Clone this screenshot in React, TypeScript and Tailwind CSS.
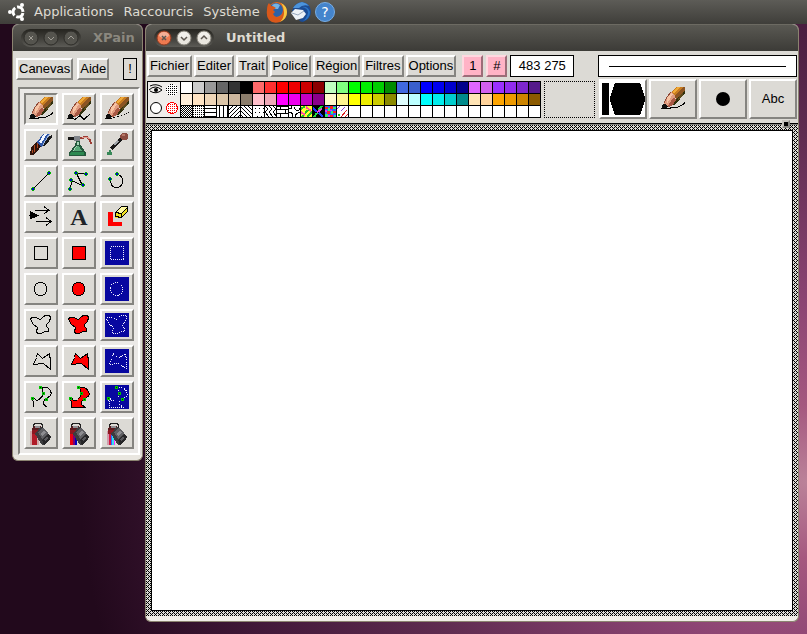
import type { ReactNode } from "react";
import clsx from "clsx";

const SWATCHES = [
  "#ffffff", "#cccccc", "#999999", "#666666", "#333333", "#000000", "#ff6a6a", "#ff3030", "#ff0000", "#ee0000",
  "#cd0000", "#8b0000", "#c1ffc1", "#80ff80", "#00ff00", "#00ee00", "#00cd00", "#008b00", "#4169e1", "#3a5fcd",
  "#0000ff", "#0000ee", "#0000cd", "#00008b", "#e066ff", "#d15fee", "#9b30ff", "#912cee", "#7d26cd", "#551a8b",
  "#ffefdb", "#ffe4c4", "#eed5b7", "#dcc6a8", "#cdb79e", "#8b7d6b", "#ffc0cb", "#eea9b8", "#ff00ff", "#ee00ee",
  "#c400c4", "#8b008b", "#fffacd", "#fff68f", "#ffff00", "#eeee00", "#cdcd00", "#8b8b00", "#e0ffff", "#bbffff",
  "#00ffff", "#00eeee", "#00cdcd", "#008b8b", "#ffe4b5", "#ffd39b", "#ffa500", "#ee9a00", "#cd8500", "#8b5a00",
];

// 11x11 fill patterns, drawn on white
const PATTERNS: ReactNode[] = [
  <rect width="11" height="11" fill="url(#checker)" />,
  <rect width="11" height="11" fill="url(#dots)" />,
  <path d="M0 2.5h11M0 6.5h11M0 10.5h11" stroke="#000" />,
  <path d="M2.5 0v11M6.5 0v11M10.5 0v11" stroke="#000" />,
  <path d="M0 4L4 0M0 8L8 0M1 11L11 1M5 11L11 5M9 11L11 9" stroke="#000" />,
  <path d="M7 0L11 4M3 0L11 8M0 1L10 11M0 5L6 11M0 9L2 11" stroke="#000" />,
  <path d="M2 2h1v1H2zM6 2h1v1H6zM2 6h1v1H2zM6 6h1v1H6zM10 2h1v1h-1zM10 6h1v1h-1zM4 10h1v1H4zM8 10h1v1H8z" />,
  <path d="M0 0l3 3-3 3 4 5M4 0l3 3-3 3 4 5M8 0l3 3-3 3 4 5" stroke="#000" fill="none" />,
  <path d="M0 3.5h11M0 7.5h11M3.5 0v4M8.5 4v4M3.5 8v3M0 .5h11" stroke="#000" fill="none" />,
  <path d="M0 3q3 0 3-3M0 6q4 0 4 5M5 1q1 4 5 3l1-2M11 7q-4-1-5 4" stroke="#000" fill="none" />,
  <>
    <rect width="11" height="11" fill="#ffff30" />
    <path d="M0 3L4 0M1 11L7 4M6 11L11 6" stroke="#20c020" strokeWidth="2" />
    <path d="M5 1l5 4M0 6l4 3" stroke="#ff50a0" strokeWidth="2" />
  </>,
  <>
    <rect width="11" height="11" />
    <path d="M0 2l4 4M6 7l4 4" stroke="#2040ff" strokeWidth="2" />
    <path d="M5 3l5-3M1 11l3-4" stroke="#20e040" strokeWidth="2" />
    <path d="M4 6l5-3" stroke="#f040e0" strokeWidth="2" />
  </>,
  <>
    <rect width="11" height="11" fill="#3060ff" />
    <path d="M0 1h3v2H0zM5 0h3v3H5zM2 5h3v3H2zM8 5h3v2H8zM5 9h3v2H5z" fill="#ff2020" />
    <path d="M3 2h2v3H3zM8 1h3v2H8zM6 5h2v3H6zM0 8h3v3H0zM9 9h2v2H9z" fill="#30f070" />
    <path d="M0 4h2v2H0zM5 4h2v1H5zM3 9h2v2H3z" fill="#f030f0" />
  </>,
  <>
    <path d="M0 3L3 0M4 5l4-4" stroke="#9040d0" />
    <path d="M4 11l6-7M8 11l3-3" stroke="#e02020" />
    <path d="M1 8h2v2H1z" fill="#20c020" />
  </>,
];

const SHAPES = {
  rect: "M8.5 7.5h13v13h-13z",
  circle: "M14.5 7.5q6 0 6 6.5t-6 6.5q-6 0-6-6.5t6-6.5z",
  blob: "M6.5 6.5l3 0 5 2 3-3 2-1 4 0 1 2-1 4-3 3 0 2 2 2 0 3-4 0-3 2-4 0-1-2 1-4-4-3-2-3-1-3z",
  poly: "M11.5 6.5l-1 4-3 7 10-1 7 6 0-8-1-8-7 5z",
  spline: "M14.5 4.5h4q4 0 6 4t-2 6l-4 3q-2 2-1 4l4 3h-14v-4l-1-5h2q1 4 5 1l3-3 0-3q1-4-2-6z",
  openSpline: "M7.5 24v-4l-1-5 2 0q1 4 5 1l3-3 0-3q1-4-2-6h4q4 0 6 4t-2 6l-4 3q-2 2-1 4l3 3",
};

const Glyph = ({ children }: { children: ReactNode }) => (
  <svg width="30" height="28" viewBox="0 0 30 28" shapeRendering="crispEdges" aria-hidden="true">
    {children}
  </svg>
);

const Pencil = ({ trail }: { trail: ReactNode }) => (
  <Glyph>
    <path d="M4 24l2-6 3-6 4-5 4 2 1 10-7 3z" fill="#e09c80" />
    <path d="M9 13l4-5 2 1-6 10z" fill="#f7c4a4" />
    <path d="M6 18l3-6 4-5" stroke="#8f4a38" fill="none" />
    <path d="M9 22l6-9 3 1v5l-7 3z" fill="#a85844" />
    <path d="M13 7l5-5h7l-8 9z" fill="#c87c20" />
    <path d="M14 7l5-5h3l-6 7z" fill="#f0aa38" />
    <path d="M17 11l8-9h2v3l-9 10z" fill="#8c5422" />
    <path d="M18 15l9-10v3L17 20l-2 0z" fill="#30300c" />
    <path d="M21 11l4-4v3l-5 6z" fill="#5c4a1c" />
    <path d="M3 24l2-5 2 0 3 3-4 2z" fill="#101010" />
    {trail}
  </Glyph>
);

const smoothTrail = <path d="M5 23.5h6l3-1h5l4-2 2-1 2-2" stroke="#000" fill="none" />;

const RING = "#00b400";

const LineEnds = ({ points }: { points: number[][] }) => (
  <>
    {points.map(([x, y]) => (
      <g key={`${x}-${y}`}>
        <path d={`M${x - 1} ${y - 2}h2v1h1v2h-1v1h-2v-1h-1v-2h1z`} fill={RING} />
        <rect x={x - 1} y={y - 1} width="2" height="2" fill="#0000d0" />
      </g>
    ))}
  </>
);

const SplineKnots = () => (
  <>
    {[[14, 4], [17, 10], [6, 15], [20, 16]].map(([x, y]) => (
      <g key={x}>
        <rect x={x - 1} y={y - 1} width="3" height="3" fill="#00c800" />
        <rect x={x} y={y} width="1" height="1" fill="#003000" />
      </g>
    ))}
  </>
);

const Outline = ({ shape }: { shape: string }) => (
  <Glyph>
    <path d={shape} fill="none" stroke="#000" />
  </Glyph>
);

const Filled = ({ shape }: { shape: string }) => (
  <Glyph>
    <path d={shape} fill="#ff0000" stroke="#000" />
  </Glyph>
);

const Selection = ({ shape, children }: { shape: string; children?: ReactNode }) => (
  <Glyph>
    <rect x="3" y="2" width="24" height="24" fill="#0808a0" />
    <path d={shape} fill="none" stroke="#f0f0ff" strokeDasharray="1 1" />
    {children}
  </Glyph>
);

const Bucket = ({ paint }: { paint: ReactNode }) => (
  <Glyph>
    {paint}
    <path d="M7.500 10V6l2-2h5l2 2v3" fill="none" stroke="#202020" />
    <path d="M7 12l2-3 7-1 9 10-1 3-6 5h-2L9 15z" fill="#3c3c3e" />
    <path d="M12 13l5-4 5 5-6 6z" fill="#606064" />
    <path d="M15 14l3-3 2 3-4 3z" fill="#8c8c90" />
    <path d="M16 21l6-6 3 3-1 3-6 5z" fill="#262628" />
    <path d="M18 20l3-2 1 1-3 3z" fill="#58585c" />
    <path d="M6 9l3-2h6l-4 5-5 2z" fill="#5c1c20" />
    <path d="M9 7h5v2H9z" fill="#909094" />
    <path d="M6 11h6l-3 4H6z" fill="#8c1820" />
  </Glyph>
);

const TOOLS: { label: string; icon: ReactNode }[] = [
  { label: "Crayon", icon: <Pencil trail={smoothTrail} /> },
  {
    label: "Crayon brisé",
    icon: <Pencil trail={<path d="M5 23.5h4l2 1 5-4 4 4 3-3 3-2" stroke="#000" fill="none" />} />,
  },
  {
    label: "Pointillé",
    icon: <Pencil trail={<path d="M5 23.500h5M11 22.500h2M15 21.500h2M19 20.500h1M22 19.500h1M24 18.500h1M26 17.500h1" stroke="#000" fill="none" />} />,
  },
  {
    label: "Pinceau",
    icon: (
      <Glyph>
        <path d="M4 24l1-8 6-5 4 4-4 6-4 3z" fill="#30140c" />
        <path d="M8 14v7M11 12l0 5M6 19v3" stroke="#b04820" />
        <path d="M11 11l6-8h7l-3 7-6 6z" fill="#2f57a8" />
        <path d="M13 11l5-8h3l-6 10z" fill="#f4f8ff" />
        <path d="M18 11l5-8h1l-3 7-5 6z" fill="#9cb4dc" />
        <path d="M22 6l4-2v2l-6 8-3 1z" fill="#181818" />
      </Glyph>
    ),
  },
  {
    label: "Aérographe",
    icon: (
      <Glyph>
        <path d="M4 6h7v3H4z" fill="#181818" />
        <path d="M10 5h6v5h-6z" fill="#80848a" />
        <path d="M16 7l7-1 3 3 1 4" stroke="#9c3c34" strokeWidth="2" fill="none" />
        <path d="M18 6l5 0 3 2" stroke="#e09c90" fill="none" />
        <path d="M12 10h4v3l6 9v3H5v-3l6-8z" fill="#24583c" />
        <path d="M13 11h2v3h-2zM12 15h2l-3 5H9z" fill="#a8d4b8" />
        <path d="M10 20l3-5h2l3 5z" fill="#58a878" />
        <path d="M7 21h13v3H6z" fill="#2c8850" />
      </Glyph>
    ),
  },
  {
    label: "Pipette",
    icon: (
      <Glyph>
        <path d="M18 4l3-2h3l2 2v3l-2 2h-4l-2-2z" fill="#8c4c40" />
        <path d="M20 3h3v2h-3z" fill="#b87868" />
        <path d="M19 8L9 18" stroke="#181818" strokeWidth="3" />
        <path d="M16 10l-4 4" stroke="#a0a4a8" strokeWidth="2" />
        <path d="M7 19h2v2h1v3H5v-3h2z" fill="#388858" />
      </Glyph>
    ),
  },
  {
    label: "Ligne",
    icon: (
      <Glyph>
        <path d="M7 22L23 6" stroke="#000" />
        <LineEnds points={[[7, 22], [23, 6]]} />
      </Glyph>
    ),
  },
  {
    label: "Ligne brisée",
    icon: (
      <Glyph>
        <path d="M22.5 6.5l-10 0 6 12-11-5-1 9" stroke="#000" fill="none" />
        <LineEnds points={[[22, 7], [12, 6], [19, 18], [7, 13], [6, 22]]} />
      </Glyph>
    ),
  },
  {
    label: "Arc",
    icon: (
      <Glyph>
        <path d="M15.5 7.5q5 1 5 6 0 7-6 7-6 0-6-8" stroke="#000" fill="none" />
        <LineEnds points={[[15, 7], [8, 12]]} />
      </Glyph>
    ),
  },
  {
    label: "Vecteurs",
    icon: (
      <Glyph>
        <path d="M4 8l9 4.500-9 4z" />
        <path d="M3 12.500h8M9 7.500h14M18 3.500l5 4-5 3M10 18.500h15M20 14.500l5 4-5 4" stroke="#000" fill="none" />
      </Glyph>
    ),
  },
  {
    label: "Texte",
    icon: <span className="font-['Liberation_Serif',serif] text-2xl leading-7 font-bold text-[#202428]">A</span>,
  },
  {
    label: "Gomme",
    icon: (
      <Glyph>
        <path d="M6 9h5v10h9v4H6z" fill="#ff0000" />
        <path d="M13 9l6-5h7v5l-7 6h-6z" fill="#f0e020" />
        <path d="M13 9l6-5h7l-7 6z" fill="#fffaa0" />
        <path d="M13.500 9.500l6-6h6v5l-6 6-6-1zM13.500 9.500l6 1 6-6M19.500 10v4" fill="none" stroke="#000" />
      </Glyph>
    ),
  },
  { label: "Rectangle", icon: <Outline shape={SHAPES.rect} /> },
  { label: "Rectangle plein", icon: <Filled shape={SHAPES.rect} /> },
  { label: "Sélection rectangle", icon: <Selection shape={SHAPES.rect} /> },
  { label: "Ovale", icon: <Outline shape={SHAPES.circle} /> },
  { label: "Ovale plein", icon: <Filled shape={SHAPES.circle} /> },
  { label: "Sélection ovale", icon: <Selection shape={SHAPES.circle} /> },
  { label: "Forme libre", icon: <Outline shape={SHAPES.blob} /> },
  { label: "Forme libre pleine", icon: <Filled shape={SHAPES.blob} /> },
  { label: "Sélection libre", icon: <Selection shape={SHAPES.blob} /> },
  { label: "Polygone", icon: <Outline shape={SHAPES.poly} /> },
  { label: "Polygone plein", icon: <Filled shape={SHAPES.poly} /> },
  { label: "Sélection polygone", icon: <Selection shape={SHAPES.poly} /> },
  {
    label: "Spline",
    icon: (
      <Glyph>
        <path d={SHAPES.openSpline} fill="none" stroke="#000" />
        <SplineKnots />
      </Glyph>
    ),
  },
  {
    label: "Spline pleine",
    icon: (
      <Glyph>
        <path d={SHAPES.spline} fill="#ff0000" stroke="#000" />
        <SplineKnots />
      </Glyph>
    ),
  },
  {
    label: "Sélection spline",
    icon: (
      <Selection shape={SHAPES.spline}>
        <SplineKnots />
      </Selection>
    ),
  },
  {
    label: "Remplissage",
    icon: (
      <Bucket
        paint={
          <>
            <path d="M4 12h9v14H4z" fill="#d0a8a8" />
            <path d="M6 12h5v14H6z" fill="#b01c28" />
          </>
        }
      />
    ),
  },
  {
    label: "Dégradé",
    icon: (
      <Bucket
        paint={
          <>
            <path d="M6 12h3v14H6z" fill="#e80010" />
            <path d="M9 12h2v14H9z" fill="#800070" />
            <path d="M11 14h2v12h-2z" fill="#0000c0" />
          </>
        }
      />
    ),
  },
  {
    label: "Motif",
    icon: (
      <Bucket
        paint={
          <>
            <path d="M5 12h2v14H5z" fill="#d09cac" />
            <path d="M7 12h2v14H7z" fill="#d01840" />
            <path d="M9 14h1v12H9z" fill="#3060ff" />
            <path d="M10 16h2v10h-2z" fill="#30e0f0" />
            <path d="M12 18h1v8h-1z" fill="#ff30ff" />
          </>
        }
      />
    ),
  },
];

const MENUS = ["Fichier", "Editer", "Trait", "Police", "Région", "Filtres", "Options"];

const RAISED = "border-2 border-t-white border-l-white border-r-[#858480] border-b-[#858480] bg-[#dcdad5]";
const SUNKEN = "border-2 border-t-[#858480] border-l-[#858480] border-r-white border-b-white bg-[#dcdad5]";

const MenuButton = ({ children, pink }: { children: ReactNode; pink?: boolean }) => (
  <button
    type="button"
    className={clsx(
      "h-[22px] shrink-0 border-2 text-center leading-4",
      pink
        ? "w-[21px] border-t-[#ffd8e0] border-r-[#9c6c78] border-b-[#9c6c78] border-l-[#ffd8e0] bg-[#ffb3c6]"
        : "border-t-white border-r-[#858480] border-b-[#858480] border-l-white bg-[#dcdad5] px-px",
    )}
  >
    {children}
  </button>
);

const CONTROL_MARKS = [
  { label: "Fermer", d: "M6 6l4 4M10 6l-4 4" },
  { label: "Réduire", d: "M5 7l3 3 3-3" },
  { label: "Agrandir", d: "M5 9l3-3 3 3" },
];

const TitleBar = ({ title, active }: { title: string; active?: boolean }) => (
  <header className="flex h-[27px] shrink-0 items-center gap-3 rounded-t-md border-t border-[#6c6a62] bg-linear-to-b from-[#5a5953] to-[#3c3b37] pl-2">
    <div className="flex h-[18px] shrink-0 items-center gap-1 rounded-full bg-linear-to-b from-[#25241f] to-[#5c5b56] px-0.5">
      {CONTROL_MARKS.map(({ label, d }, i) => (
        <button key={label} type="button" aria-label={label}>
          <svg width="16" height="16" viewBox="0 0 16 16" aria-hidden="true">
            <circle
              cx="8"
              cy="8"
              r="7"
              fill={active ? (i === 0 ? "#ef7a50" : "#e9e6df") : "#55544e"}
              stroke={active ? (i === 0 ? "#8c3a20" : "#86837a") : "#2e2d29"}
            />
            {active && <ellipse cx="8" cy="5" rx="5" ry="3" fill="#fff" opacity=".4" />}
            <path d={d} fill="none" stroke={active ? "#5c5650" : "#a19e96"} strokeWidth={active ? 1.5 : 1} />
          </svg>
        </button>
      ))}
    </div>
    <h1
      className={clsx(
        "font-['DejaVu_Sans',sans-serif] text-[13px] leading-5 font-bold whitespace-nowrap",
        active ? "text-[#dfdbd2]" : "text-[#8b887f]",
      )}
    >
      {title}
    </h1>
  </header>
);

const TopPanel = () => (
  <nav className="flex h-6 shrink-0 items-center gap-2 bg-linear-to-b from-[#5d5c57] to-[#3f3e3a] pl-2 font-['DejaVu_Sans',sans-serif] text-[13px] text-[#dfdbd2]">
    <svg width="18" height="20" viewBox="0 0 18 20" aria-hidden="true">
      <circle cx="10" cy="10" r="5" fill="none" stroke="#fff" strokeWidth="3" strokeDasharray="8.500 2" strokeDashoffset="-1" />
      <circle cx="2" cy="10" r="2" fill="#fff" />
      <circle cx="14" cy="3" r="2" fill="#fff" />
      <circle cx="14" cy="17" r="2" fill="#fff" />
    </svg>
    <div className="flex gap-[10px]">
      <a href="#applications">Applications</a>
      <a href="#raccourcis">Raccourcis</a>
      <a href="#systeme">Système</a>
    </div>
    <div className="-ml-0.5 flex gap-0.5">
      <a href="#firefox" aria-label="Firefox">
        <svg width="22" height="22" viewBox="0 0 22 22" aria-hidden="true">
          <circle cx="11" cy="11" r="10" fill="#e06a1c" />
          <circle cx="10" cy="9" r="7" fill="#2c62a8" />
          <path d="M6 4q4-3 8 0l-2 4-4 0z" fill="#74b4e4" />
          <path d="M1 9q0-5 2-7l2 3q3 0 5 2l-3 2 2 2-2 2q2 4 5 3 5-1 5-6l3-1q0 9-6 12-7 2-11-2-3-4-2-10z" fill="#d9581a" />
          <path d="M15 2q6 3 6 9 0 7-7 10 4-4 4-9 0-6-3-10z" fill="#f8c840" />
        </svg>
      </a>
      <a href="#thunderbird" aria-label="Thunderbird">
        <svg width="22" height="22" viewBox="0 0 22 22" aria-hidden="true">
          <path d="M2 10q2-8 10-9 8 1 9 9 0 8-8 11-3 0-4-2l6-4z" fill="#1c4c94" />
          <path d="M3 7q3-5 9-6 5 1 7 4-6-2-10 2z" fill="#4c94dc" />
          <path d="M1 12l4-4 8 1 3 4-3 4-7 2z" fill="#eef2f6" />
          <path d="M2 12l6 2 6-4" fill="none" stroke="#98a8bc" />
          <path d="M12 6q6 1 6 6-1 5-5 8 7-2 7-9-2-6-8-5z" fill="#2c74c4" />
        </svg>
      </a>
      <a href="#aide" aria-label="Aide">
        <svg width="22" height="22" viewBox="0 0 22 22" aria-hidden="true">
          <circle cx="11" cy="11" r="9.500" fill="#4484cc" stroke="#79aee4" />
          <text x="11" y="16" textAnchor="middle" fontSize="14" fontFamily="DejaVu Sans, sans-serif" fill="#fff">
            ?
          </text>
        </svg>
      </a>
    </div>
  </nav>
);

const Toolbox = () => (
  <section className="w-[131px] shrink-0 rounded-t-md rounded-b-md border-x border-b border-[#8b8370] bg-[#e9e6e0]">
    <TitleBar title="XPain" />
    <div className="bg-[#dcdad5] pt-[7px]">
      <div className="flex items-start gap-1 pr-[5px] pl-[3px]">
        <MenuButton>Canevas</MenuButton>
        <MenuButton>Aide</MenuButton>
        <button type="button" className="ml-auto h-[22px] w-[14px] border border-black leading-5">
          !
        </button>
      </div>
      <div className="mt-[7px] mr-0.5 ml-[5px] grid grid-cols-3 gap-1 border-2 border-t-[#858480] border-r-white border-b-white border-l-[#858480] bg-[#ebe9e7] p-1">
        {TOOLS.map(({ label, icon }, i) => (
          <button
            key={label}
            type="button"
            aria-label={label}
            className={clsx("flex h-8 items-center justify-center", i === 0 ? SUNKEN : RAISED)}
          >
            {icon}
          </button>
        ))}
      </div>
    </div>
    <div className="h-[5px]" />
  </section>
);

const Palette = () => (
  <div className="flex shrink-0 border border-black">
    <div className="grid w-8 grid-cols-2 bg-[#efedeb]">
      <button type="button" aria-label="Aperçu">
        <svg width="16" height="17" viewBox="0 0 16 17" aria-hidden="true">
          <path d="M1 8q6-6 13 0-6 5-12 1M2 4q6-3 12 1" fill="none" stroke="#000" />
          <circle cx="8" cy="8" r="2" />
        </svg>
      </button>
      <button type="button" aria-label="Trame">
        <svg width="16" height="17" viewBox="0 0 16 17" shapeRendering="crispEdges" aria-hidden="true">
          <circle cx="8" cy="8" r="6" fill="#fff" />
          <circle cx="8" cy="8" r="6" fill="url(#dots)" />
        </svg>
      </button>
      <button type="button" aria-label="Couleur">
        <svg width="16" height="17" viewBox="0 0 16 17" aria-hidden="true">
          <circle cx="8" cy="8" r="5.500" fill="#fff" stroke="#000" />
        </svg>
      </button>
      <button type="button" aria-label="Trame active">
        <svg width="16" height="17" viewBox="0 0 16 17" shapeRendering="crispEdges" aria-hidden="true">
          <circle cx="8" cy="8" r="5.500" fill="#fff" stroke="#ff0000" />
          <circle cx="8" cy="8" r="5" fill="url(#redDots)" />
        </svg>
      </button>
    </div>
    <div className="grid grid-cols-[repeat(30,11px)] gap-px border-l border-black bg-black">
      {SWATCHES.map((color) => (
        <button key={color} type="button" aria-label={color} className="h-[11px]" style={{ backgroundColor: color }} />
      ))}
      {Array.from({ length: 30 }, (_, i) => (
        <button key={i} type="button" aria-label={`Motif ${i + 1}`} className="h-[11px] bg-white">
          {PATTERNS[i] && (
            <svg width="11" height="11" viewBox="0 0 11 11" shapeRendering="crispEdges" aria-hidden="true">
              {PATTERNS[i]}
            </svg>
          )}
        </button>
      ))}
    </div>
  </div>
);

const StatusTools = () => (
  <div className="flex w-[199px] shrink-0 flex-col gap-0.5">
    <div className="flex h-[22px] items-center border border-black bg-white px-[10px]">
      <div className="h-px flex-1 bg-black" />
    </div>
    <div className="ml-px grid h-10 grid-cols-4 gap-0.5">
      <button type="button" aria-label="Brosse" className={clsx("flex items-center justify-center overflow-hidden", RAISED)}>
        <svg width="44" height="36" viewBox="0 0 44 36" shapeRendering="crispEdges" aria-hidden="true">
          <rect width="44" height="36" fill="#fff" />
          <path d="M1 2h7v32H1zM14 2h25l5 14v4l-5 14H14L9 20v-4z" />
        </svg>
      </button>
      <button type="button" aria-label="Outil courant" className={clsx("flex items-center justify-center", RAISED)}>
        <Pencil trail={smoothTrail} />
      </button>
      <button type="button" aria-label="Pointe" className={clsx("flex items-center justify-center", RAISED)}>
        <svg width="14" height="14" viewBox="0 0 14 14" aria-hidden="true">
          <circle cx="7" cy="7" r="7" />
        </svg>
      </button>
      <button type="button" className={clsx("text-center", RAISED)}>
        Abc
      </button>
    </div>
  </div>
);

const Editor = () => (
  <section className="flex min-w-0 flex-1 flex-col rounded-t-md rounded-b-md border-x border-b border-[#8b8370] bg-[#f0ede6]">
    <TitleBar title="Untitled" active />
    <div className="relative flex justify-between gap-0.5 border-b border-black bg-[#dcdad5] px-px pt-1 pb-1">
      <div className="flex flex-1 flex-col gap-1">
        <div className="flex gap-0.5">
          {MENUS.map((menu) => (
            <MenuButton key={menu}>{menu}</MenuButton>
          ))}
          <div className="ml-1 flex gap-[3px]">
            <MenuButton pink>1</MenuButton>
            <MenuButton pink>#</MenuButton>
            <output className="h-[22px] w-16 border border-black bg-white text-center leading-5">483 275</output>
          </div>
        </div>
        <div className="flex gap-[3px]">
          <Palette />
          <div className="w-[51px] border border-dotted border-black" />
        </div>
      </div>
      <StatusTools />
      <div className="absolute right-2 -bottom-[5px] z-10 size-2 border-2 border-t-[#c4c2bd] border-r-[#858480] border-b-[#858480] border-l-[#c4c2bd] bg-black" />
    </div>
    <div className="grid flex-1 border-t border-[#858480]">
      <svg width="100%" height="100%" className="col-start-1 row-start-1 h-full min-h-0" shapeRendering="crispEdges" aria-hidden="true">
        <rect width="100%" height="100%" fill="url(#weave)" />
      </svg>
      <main className="z-1 col-start-1 row-start-1 m-[5px] border border-black bg-white" />
    </div>
    <div className="h-[5px] shrink-0" />
  </section>
);

const PatternDefs = () => (
  <svg className="absolute size-0" aria-hidden="true">
    <defs>
      <pattern id="checker" width="2" height="2" patternUnits="userSpaceOnUse">
        <path d="M0 0h1v1H0zM1 1h1v1H1z" />
      </pattern>
      <pattern id="dots" width="2" height="2" patternUnits="userSpaceOnUse">
        <path d="M0 0h1v1H0z" />
      </pattern>
      <pattern id="redDots" width="2" height="2" patternUnits="userSpaceOnUse">
        <path d="M0 0h1v1H0z" fill="#ff0000" />
      </pattern>
      <pattern id="weave" width="4" height="4" patternUnits="userSpaceOnUse">
        <rect width="4" height="4" fill="#dcdad5" />
        <path d="M0 0h1v1H0zM1 1h1v1H1zM2 2h1v1H2zM3 3h1v1H3zM2 0h1v1H2zM0 2h1v1H0z" />
      </pattern>
    </defs>
  </svg>
);

export default function App() {
  return (
    <div className="flex min-h-screen flex-col bg-[#22091c] bg-[radial-gradient(90%_100%_at_100%_76%,#bb8299_0%,#a5587f_12%,#8c4473_28%,#5f2c50_55%,#43193a_78%,#22091c_100%)] font-['Liberation_Sans',Arial,sans-serif] text-[13px] text-black">
      <PatternDefs />
      <TopPanel />
      <div className="flex flex-1 items-start gap-0.5 pr-2 pb-3 pl-3">
        <Toolbox />
        <div className="flex min-w-0 flex-1 self-stretch">
          <Editor />
        </div>
      </div>
    </div>
  );
}
